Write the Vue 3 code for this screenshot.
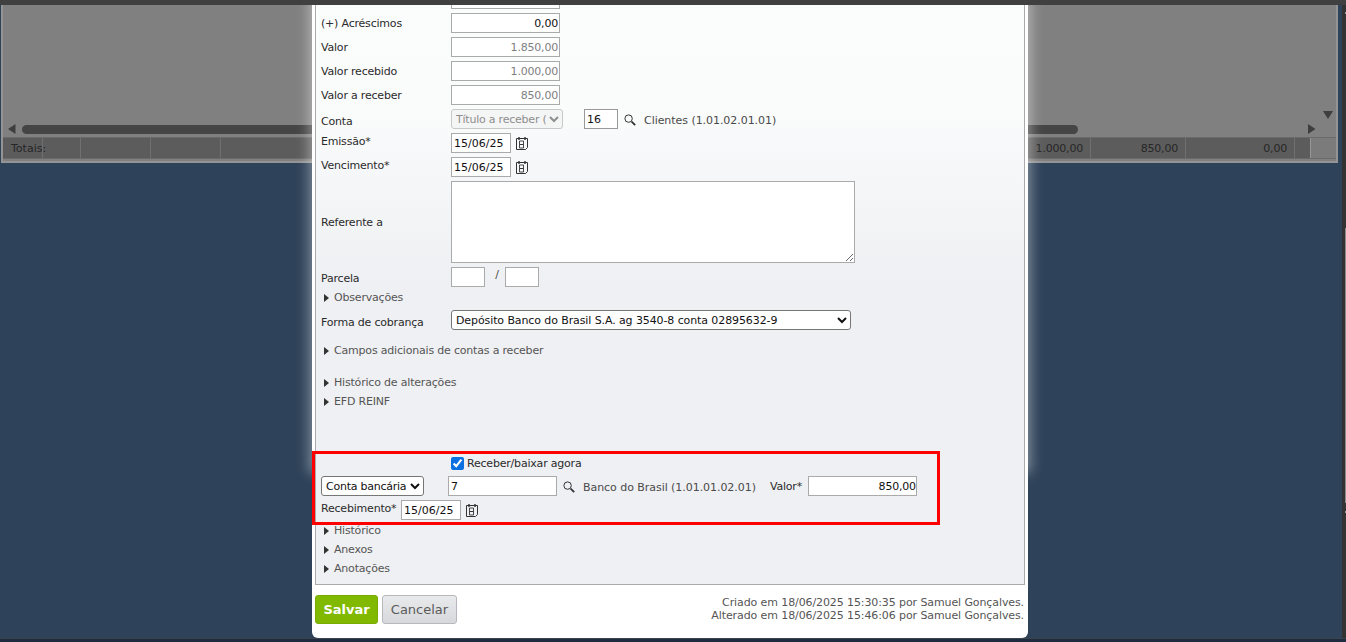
<script setup>
const amountRows = [
  { label: '(+) Acréscimos', value: '0,00', off: false },
  { label: 'Valor', value: '1.850,00', off: true },
  { label: 'Valor recebido', value: '1.000,00', off: true },
  { label: 'Valor a receber', value: '850,00', off: true },
]
</script>

<template>
  <div class="screen">
    <div class="topbar"></div>
    <div class="grid-panel">
      <div class="grid-body">
        <svg class="arr arr-down" width="10" height="8" viewBox="0 0 10 8"><path d="M0 0h10L5 8z" /></svg>
        <div class="hscroll">
          <svg width="8" height="10" viewBox="0 0 8 10"><path d="M7.5 0v10L0 5z" /></svg>
          <div class="thumb"></div>
          <svg width="8" height="10" viewBox="0 0 8 10"><path d="M0 0v10l7.5-5z" /></svg>
        </div>
      </div>
      <div class="totals">
        <span class="total-label">Totais:</span>
        <div class="total-cell c0"></div>
        <div class="total-cell c1"></div>
        <div class="total-cell c2"></div>
        <div class="total-cell c2"></div>
        <div class="total-spacer"></div>
        <div class="total-cell v1">1.000,00</div>
        <div class="total-cell v2">850,00</div>
        <div class="total-cell v3">0,00</div>
        <div class="total-end"></div>
      </div>
    </div>

    <div class="glow"></div>
    <div class="modal">
      <div class="panel">
        <div class="row"><span class="lab"></span><input class="inp num" /></div>
        <div v-for="r in amountRows" :key="r.label" class="row">
          <span class="lab">{{ r.label }}</span>
          <input class="inp num" :class="{ off: r.off }" :value="r.value" />
        </div>
        <div class="row">
          <span class="lab low2">Conta</span>
          <select class="sel off-sel" disabled><option>Título a receber (1.01.02.01.01)</option></select>
          <input class="inp code" value="16" />
          <svg class="lens" width="12" height="12" viewBox="0 0 12 12"><circle cx="4.6" cy="4.6" r="3.7" /><path class="grip" d="M7.6 7.6l3.6 3.6" /></svg>
          <span class="acct">Clientes (1.01.02.01.01)</span>
        </div>
        <div class="row">
          <span class="lab high">Emissão*</span>
          <input class="inp date" value="15/06/25" />
          <svg class="cal" width="12" height="13" viewBox="0 0 12 13">
            <path d="M.5 1.5h11v9l-2 2H.5z" /><path class="ring" d="M3 0v3M9 0v3" />
            <path class="eight" d="M3.5 4h4v3.5h-4zM3.5 7.5h4V11h-4z" />
          </svg>
        </div>
        <div class="row">
          <span class="lab high">Vencimento*</span>
          <input class="inp date" value="15/06/25" />
          <svg class="cal" width="12" height="13" viewBox="0 0 12 13">
            <path d="M.5 1.5h11v9l-2 2H.5z" /><path class="ring" d="M3 0v3M9 0v3" />
            <path class="eight" d="M3.5 4h4v3.5h-4zM3.5 7.5h4V11h-4z" />
          </svg>
        </div>
        <div class="row area-row">
          <span class="lab">Referente a</span>
          <textarea class="area"></textarea>
        </div>
        <div class="row">
          <span class="lab low1">Parcela</span>
          <input class="inp small" />
          <span class="slash">/</span>
          <input class="inp small" />
        </div>
        <div class="tog obs"><i class="tri"></i>Observações</div>
        <div class="row forma">
          <span class="lab low2">Forma de cobrança</span>
          <select class="sel wide"><option>Depósito Banco do Brasil S.A. ag 3540-8 conta 02895632-9</option></select>
        </div>
        <div class="tog campos"><i class="tri"></i>Campos adicionais de contas a receber</div>
        <div class="tog hist"><i class="tri"></i>Histórico de alterações</div>
        <div class="tog"><i class="tri"></i>EFD REINF</div>

        <div class="check-row">
          <input class="check" type="checkbox" checked />
          <span>Receber/baixar agora</span>
        </div>
        <div class="bank-row">
          <select class="sel bank"><option>Conta bancária</option></select>
          <input class="inp bank-code" value="7" />
          <svg class="lens" width="12" height="12" viewBox="0 0 12 12"><circle cx="4.6" cy="4.6" r="3.7" /><path class="grip" d="M7.6 7.6l3.6 3.6" /></svg>
          <span class="acct">Banco do Brasil (1.01.01.02.01)</span>
          <span class="valor-lab">Valor*</span>
          <input class="inp num valor" value="850,00" />
        </div>
        <div class="rec-row">
          <span class="rec-lab">Recebimento*</span>
          <input class="inp date" value="15/06/25" />
          <svg class="cal" width="12" height="13" viewBox="0 0 12 13">
            <path d="M.5 1.5h11v9l-2 2H.5z" /><path class="ring" d="M3 0v3M9 0v3" />
            <path class="eight" d="M3.5 4h4v3.5h-4zM3.5 7.5h4V11h-4z" />
          </svg>
        </div>

        <div class="tog t-hist"><i class="tri"></i>Histórico</div>
        <div class="tog"><i class="tri"></i>Anexos</div>
        <div class="tog"><i class="tri"></i>Anotações</div>
      </div>
      <div class="footer">
        <button class="btn save">Salvar</button>
        <button class="btn cancel">Cancelar</button>
        <div class="audit">
          <div>Criado em 18/06/2025 15:30:35 por Samuel Gonçalves.</div>
          <div>Alterado em 18/06/2025 15:46:06 por Samuel Gonçalves.</div>
        </div>
      </div>
    </div>
    <div class="redbox"></div>
    <div class="edge"></div>
    <div class="bottom"></div>
  </div>
</template>

<style>
html, body { margin: 0; background: #2d425a; overflow: hidden; }
</style>

<style scoped>
.screen {
  position: relative;
  width: 1346px;
  height: 642px;
  overflow: hidden;
  background: #2e4259;
  font-family: "DejaVu Sans", Verdana, sans-serif;
  font-size: 11px;
  color: #2b2b2b;
}
.topbar { position: relative; z-index: 3; height: 5px; background: #404040; }
.grid-panel {
  position: absolute;
  left: 1px;
  top: 5px;
  width: 1337px;
  height: 158px;
  box-sizing: border-box;
  border: 2px solid #949494;
  border-top: 0;
  background: #808080;
  display: flex;
  flex-direction: column;
}
.grid-body { position: relative; flex: 1; }
.arr path, .hscroll path { fill: #3e3e3e; }
.arr-down { position: absolute; right: 3px; top: 106px; }
.hscroll {
  position: absolute;
  left: 5px;
  right: 20px;
  bottom: 3px;
  height: 10px;
  display: flex;
  align-items: center;
}
.thumb {
  height: 9px;
  width: 1056px;
  margin-left: 6px;
  margin-right: auto;
  background: #454545;
  border-radius: 5px;
}
.totals {
  position: relative;
  flex: none;
  box-sizing: border-box;
  height: 22px;
  margin-bottom: 2px;
  border-top: 1px solid #6a6a6a;
  border-bottom: 1px solid #6a6a6a;
  background: #5c5c5c;
  display: flex;
  color: #262626;
  line-height: 21px;
}
.total-label { position: absolute; left: 8px; top: 0; }
.total-cell { border-right: 1px solid #707070; text-align: right; padding-right: 7px; box-sizing: border-box; letter-spacing: -.2px; }
.c0 { width: 40px; padding: 0; }
.c1 { width: 38px; padding: 0; }
.c2 { width: 70px; padding: 0; }
.total-spacer { width: 808px; }
.v1 { width: 62px; }
.v2 { width: 95px; }
.v3 { width: 109px; }
.total-end { width: 26px; margin-left: auto; background: #7b7b7b; border-left: 1px solid #969696; box-sizing: border-box; }

.glow {
  position: absolute;
  left: 312px;
  top: 0;
  width: 716px;
  height: 470px;
  box-shadow: 0 0 12px 3px rgba(255, 255, 255, .4);
}
.modal {
  position: absolute;
  left: 312px;
  top: -20px;
  width: 716px;
  height: 658px;
  box-sizing: border-box;
  padding: 0 3px;
  background: #fff;
  border-radius: 0 0 6px 6px;
  display: flex;
  flex-direction: column;
}
.panel {
  height: 605px;
  flex: none;
  box-sizing: border-box;
  border: 1px solid #aaa;
  border-top: 0;
  background: linear-gradient(#fbfcfc, #fafbfb 130px, #eff0f3 300px);
  padding: 7px 0 0 5px;
}
.row { display: flex; align-items: center; height: 24px; }
.lab { width: 130px; flex: none; letter-spacing: -.2px; }
.low1 { position: relative; top: 1px; }
.low2 { position: relative; top: 2px; }
.high { position: relative; top: -2px; }
.inp {
  box-sizing: border-box;
  height: 20px;
  flex: none;
  border: 1px solid #aaa;
  background: #fff;
  font: 11px "DejaVu Sans", Verdana, sans-serif;
  color: #111;
  padding: 0 1px;
  outline: none;
  margin: 0;
  border-radius: 0;
}
.num { width: 109px; text-align: right; letter-spacing: -.2px; }
.valor { padding-right: 0; }
.off { color: #808080; }
.sel {
  box-sizing: border-box;
  height: 20px;
  flex: none;
  margin: 0;
  font: 11px "DejaVu Sans", Verdana, sans-serif;
  color: #111;
  background-color: #fff;
  border: 1px solid #767676;
  border-radius: 3px;
}
.off-sel {
  width: 112px;
  color: #8e8e8e;
  background-color: #f4f5f5;
  border-color: #c8c8c8;
  opacity: 1;
  letter-spacing: -.22px;
}
.code { width: 34px; margin-left: 21px; padding-left: 2px; border-color: #999; }
.lens { fill: none; stroke: #333; stroke-width: 1; flex: none; margin-left: 6px; margin-top: 1px; }
.grip { stroke-width: 1.8; }
.acct { margin-left: 8px; color: #4a4a4a; letter-spacing: -.05px; position: relative; top: 1px; }
.date { width: 60px; padding-left: 2px; }
.cal { fill: none; stroke: #333; stroke-width: 1; flex: none; margin-left: 5px; margin-top: 1px; }
.ring { stroke-width: 1.4; }
.eight { stroke-width: .9; }
.area-row { height: 86px; }
.area {
  width: 404px;
  height: 82px;
  box-sizing: border-box;
  border: 1px solid #aaa;
  background: #fff;
  margin: 0;
  border-radius: 0;
  outline: none;
  resize: both;
}
.small { width: 34px; }
.slash { width: 20px; box-sizing: border-box; padding-left: 4px; text-align: center; margin-top: -6px; color: #4a4a4a; }
.tog { display: flex; align-items: center; height: 19px; color: #555; padding-left: 3px; letter-spacing: -.19px; }
.tri {
  width: 0;
  height: 0;
  border-left: 5px solid #333;
  border-top: 4px solid transparent;
  border-bottom: 4px solid transparent;
  margin-right: 5px;
  flex: none;
}
.obs { margin-top: -1px; }
.forma { margin-top: 1px; }
.wide { width: 400px; letter-spacing: -.1px; }
.campos { margin-top: 9px; }
.hist { margin-top: 13px; }
.check-row { display: flex; align-items: center; height: 20px; padding-left: 130px; margin-top: 42px; letter-spacing: -.2px; }
.check { width: 13px; height: 13px; margin: 0 3px 0 0; accent-color: #0b70e0; }
.bank-row { display: flex; align-items: center; height: 20px; margin-top: 3px; }
.bank { width: 103px; letter-spacing: -.25px; }
.bank-code { width: 109px; margin-left: 24px; padding-left: 2px; }
.valor-lab { margin-left: 14px; width: 38px; flex: none; letter-spacing: -.2px; }
.rec-row { display: flex; align-items: center; height: 20px; margin-top: 4px; }
.rec-lab { width: 80px; flex: none; position: relative; top: -2px; letter-spacing: -.2px; }
.t-hist { margin-top: 1px; }
.footer { display: flex; align-items: flex-start; padding-top: 10px; }
.btn {
  height: 29px;
  box-sizing: border-box;
  border-radius: 3px;
  font-size: 13px;
  margin: 0;
  padding: 0;
  font-family: "DejaVu Sans", Verdana, sans-serif;
}
.save {
  width: 63px;
  border: 1px solid #79ab00;
  background: #81b900;
  color: #fff;
  font-weight: 700;
}
.cancel {
  width: 75px;
  margin-left: 4px;
  border: 1px solid #b5b8bc;
  background: linear-gradient(#e9eaec, #d6d8db);
  color: #5a5a5a;
}
.audit { margin-left: auto; text-align: right; color: #555; line-height: 13px; padding-top: 1px; padding-right: 1px; letter-spacing: -.1px; }
.redbox {
  position: absolute;
  left: 312px;
  top: 451px;
  width: 628px;
  height: 74px;
  box-sizing: border-box;
  border: 3px solid #f00;
}
.edge {
  position: absolute;
  right: 0;
  top: 5px;
  width: 4px;
  height: 633px;
  background: #333;
}
.edge::before {
  content: "";
  position: absolute;
  right: 0;
  top: 7px;
  width: 1px;
  height: 2px;
  background: #999;
  box-shadow: 0 499px 0 #999;
}
.edge::after {
  content: "";
  position: absolute;
  right: 0;
  top: 223px;
  width: 1px;
  height: 275px;
  background: #8c8c8c;
}
.bottom {
  position: absolute;
  left: 0;
  right: 0;
  bottom: 0;
  height: 4px;
  background: #1d2c40;
  border-top: 1px solid #3d4249;
  box-sizing: border-box;
}
</style>
